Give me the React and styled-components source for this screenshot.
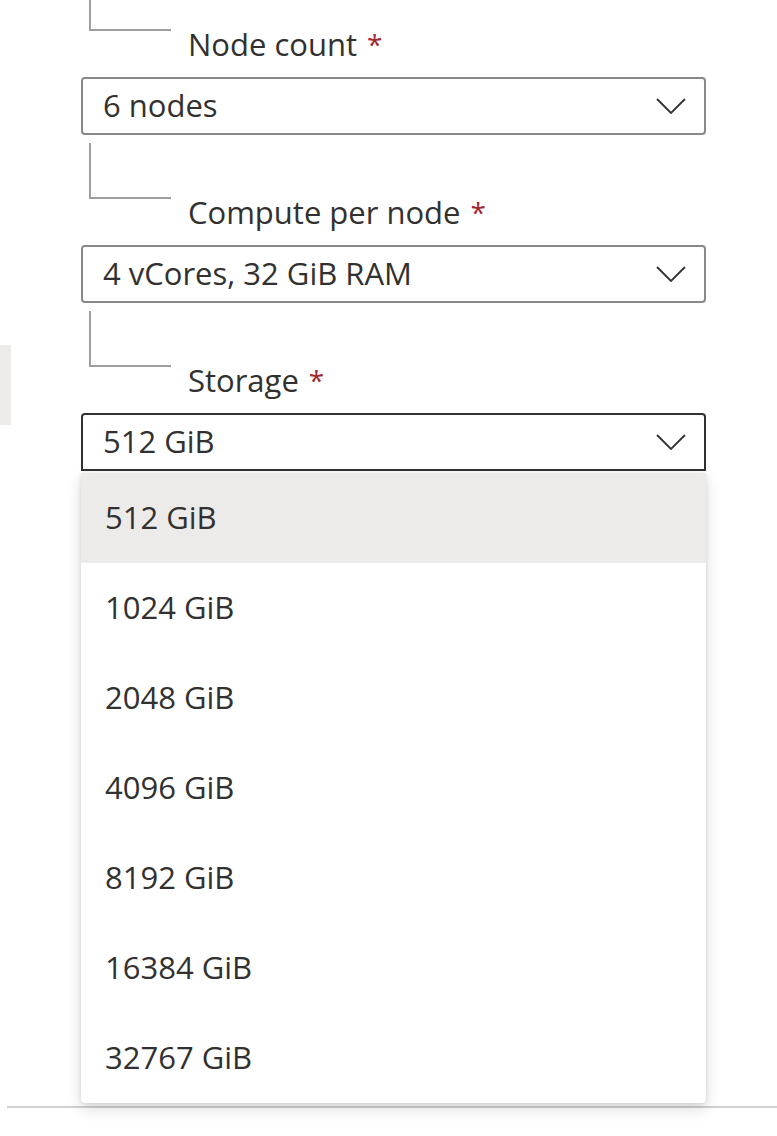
import React from "react";
import styled, { createGlobalStyle } from "styled-components";

const GlobalStyle = createGlobalStyle`
  html, body {
    margin: 0;
    padding: 0;
    background: #ffffff;
  }
  body {
    font-family: "Segoe UI", "Open Sans", "Noto Sans", sans-serif;
    color: #323130;
  }
`;

const fields = [
  { label: "Node count", value: "6 nodes", lineHeight: 31 },
  { label: "Compute per node", value: "4 vCores, 32 GiB RAM", lineHeight: 56 },
  { label: "Storage", value: "512 GiB", lineHeight: 56, open: true },
];

const storageOptions = [
  "512 GiB",
  "1024 GiB",
  "2048 GiB",
  "4096 GiB",
  "8192 GiB",
  "16384 GiB",
  "32767 GiB",
];

const Chevron = () => (
  <svg width="30" height="16" viewBox="0 0 30 16" fill="none">
    <path d="M1 1 L15 15 L29 1" stroke="#323130" strokeWidth="1.8" />
  </svg>
);

const App = () => {
  return (
    <>
      <GlobalStyle />
      <Page>
        <Main>
          <Rail>
            <RailThumb />
          </Rail>
          <Form>
            {fields.map((field, i) => (
              <Field key={field.label} first={i === 0}>
                <Connector h={field.lineHeight} />
                <Label>{field.label}</Label>
                <DropdownWrap>
                  <Dropdown open={field.open}>
                    <DropdownText>{field.value}</DropdownText>
                    <Chevron />
                  </Dropdown>
                  {field.open && (
                    <Menu>
                      {storageOptions.map((opt, j) => (
                        <MenuItem key={opt} selected={j === 0}>
                          {opt}
                        </MenuItem>
                      ))}
                    </Menu>
                  )}
                </DropdownWrap>
              </Field>
            ))}
          </Form>
        </Main>
        <Footer />
      </Page>
    </>
  );
};

export default App;

const Page = styled.div`
  width: 777px;
  min-height: 1136px;
  overflow: hidden;
`;

const Main = styled.div`
  display: flex;
  min-height: 1106px;
`;

const Rail = styled.div`
  width: 11px;
  padding-top: 345px;
`;

const RailThumb = styled.div`
  height: 80px;
  background: #edebe9;
`;

const Form = styled.div`
  margin-left: 70px;
  width: 625px;
`;

const Field = styled.div`
  margin-top: ${p => (p.first ? 0 : 8)}px;
`;

const Connector = styled.div`
  box-sizing: border-box;
  margin-left: 8px;
  width: 82px;
  height: ${p => p.h}px;
  border-left: 2px solid #a19f9d;
  border-bottom: 2px solid #a19f9d;
`;

const Label = styled.div`
  margin: -7px 0 13px 107px;
  height: 40px;
  font-size: 31px;
  line-height: 40px;
  color: #323130;
  white-space: nowrap;

  &::after {
    content: "*";
    color: #a4262c;
    font-size: 28px;
    vertical-align: top;
    padding-left: 10px;
  }
`;

const DropdownWrap = styled.div`
  position: relative;
`;

const Dropdown = styled.div`
  box-sizing: border-box;
  height: 58px;
  display: flex;
  align-items: center;
  justify-content: space-between;
  padding: 0 18px 0 20px;
  border: 2px solid ${p => (p.open ? "#323130" : "#8a8886")};
  border-radius: ${p => (p.open ? "4px 4px 0 0" : "4px")};
  background: #ffffff;
`;

const DropdownText = styled.span`
  padding-bottom: 3px;
  font-size: 31px;
  line-height: 40px;
  color: #323130;
`;

const Menu = styled.div`
  position: absolute;
  top: calc(100% + 2px);
  left: 0;
  right: 0;
  background: #ffffff;
  border-radius: 0 0 4px 4px;
  box-shadow: 0 6px 16px rgba(0, 0, 0, 0.14), 0 1px 4px rgba(0, 0, 0, 0.1);
  z-index: 2;
`;

const MenuItem = styled.div`
  box-sizing: border-box;
  height: 90px;
  display: flex;
  align-items: center;
  padding: 0 0 2px 24px;
  font-size: 31px;
  color: #323130;
  background: ${p => (p.selected ? "#edebe9" : "transparent")};
`;

const Footer = styled.div`
  margin-left: 7px;
  border-top: 2px solid #d2d0ce;
`;
